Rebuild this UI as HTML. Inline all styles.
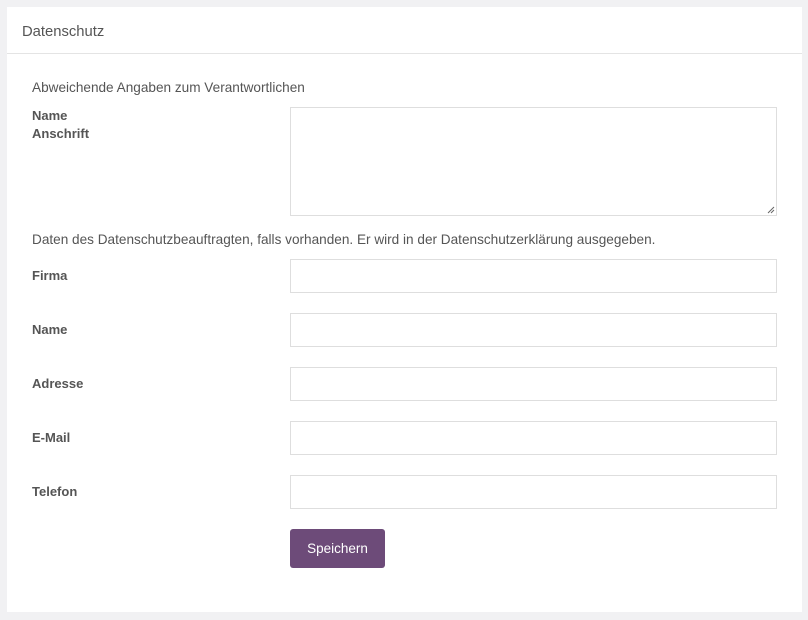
<!DOCTYPE html>
<html><head><style>
body{margin:0;background:#f1f1f3;font-family:"Liberation Sans",sans-serif;width:808px;height:620px;position:relative;overflow:hidden}
.panel{position:absolute;left:7px;top:7px;width:795px;height:605px;background:#fff}
.hd{position:absolute;left:0;top:0;right:0;height:46px;border-bottom:1px solid #e4e4e4}
.hd span{position:absolute;left:15px;top:17px;font-size:14.8px;color:#555}
.t{position:absolute;font-size:13.6px;color:#555}
.l{position:absolute;left:25px;font-size:13px;font-weight:bold;color:#555;line-height:18px}
.in{position:absolute;left:283px;width:485px;height:32px;border:1px solid #dedede;background:#fff}
.btn{position:absolute;left:283px;top:522px;width:95px;height:39px;background:#6d4b79;border-radius:3px;color:#fff;font-size:13.5px;text-align:center;line-height:39px}
</style></head><body>
<div class="panel">
<div class="hd"><span>Datenschutz</span></div>
<div class="t" style="left:25px;top:73px">Abweichende Angaben zum Verantwortlichen</div>
<div class="l" style="top:100px">Name<br>Anschrift</div>
<div class="in" style="top:100px;height:107px"><svg style="position:absolute;right:1px;bottom:1px" width="8" height="8"><path d="M7 1L1 7M7 4L4 7" stroke="#666" stroke-width="1"/></svg></div>
<div class="t" style="left:25px;top:225px">Daten des Datenschutzbeauftragten, falls vorhanden. Er wird in der Datenschutzerklärung ausgegeben.</div>
<div class="l" style="top:260px">Firma</div><div class="in" style="top:252px"></div>
<div class="l" style="top:314px">Name</div><div class="in" style="top:306px"></div>
<div class="l" style="top:368px">Adresse</div><div class="in" style="top:360px"></div>
<div class="l" style="top:422px">E-Mail</div><div class="in" style="top:414px"></div>
<div class="l" style="top:476px">Telefon</div><div class="in" style="top:468px"></div>
<div class="btn">Speichern</div>
</div>
</body></html>
